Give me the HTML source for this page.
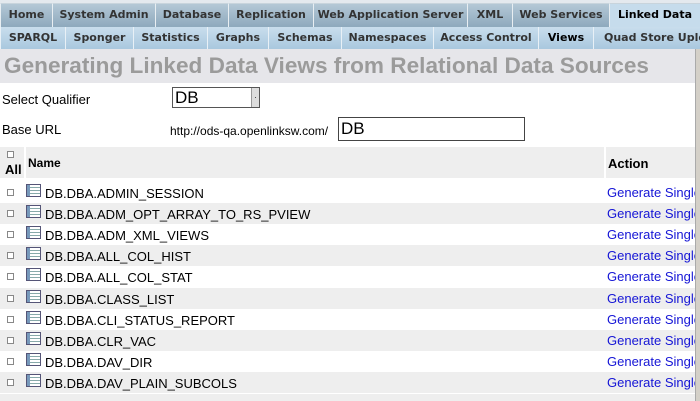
<!DOCTYPE html><html><head><style>
body{margin:0;width:700px;height:401px;overflow:hidden;background:#fff;font-family:"Liberation Sans",sans-serif;position:relative}
.a{position:absolute}
.t1{top:3px;height:24px;background:linear-gradient(#b4c8d6,#8ea9bd);border-left:1px solid #e8eef2;border-top:1px solid #c8d4dc;box-sizing:border-box;font-family:"DejaVu Sans",sans-serif;font-weight:bold;font-size:11px;color:#333;text-align:center;line-height:22px}
.t2{top:27px;height:22px;background:linear-gradient(#c9deed,#a9c8de);border-left:1px solid #e8f0f6;box-sizing:border-box;font-family:"DejaVu Sans",sans-serif;font-weight:bold;font-size:11px;color:#333;text-align:center;line-height:21px;white-space:nowrap;overflow:hidden}
.r{position:absolute;left:0;width:695px;height:21px;font-size:13px;color:#000;overflow:hidden}
.r.g{background:#eeeeee}
.cb{position:absolute;left:7px;top:7px;width:5px;height:5px;border:1px solid #888;background:#fff}
.ic{position:absolute;left:26px;top:2px;width:13px;height:11px;border:1px solid #557;background:repeating-linear-gradient(#fff 0 2px,#8aa 2px 3px);box-shadow:inset 3px 0 0 #79b}
.nm{position:absolute;left:45px;top:4px}
.ac{position:absolute;left:607px;top:3px;color:#1515d6;white-space:nowrap;font-size:13px}
</style></head><body>
<div class="a" style="left:0;top:0;width:700px;height:3px;background:#e4e9ee"></div>
<div class="a t1" style="left:0;width:52px">Home</div>
<div class="a t1" style="left:52px;width:103px">System Admin</div>
<div class="a t1" style="left:155px;width:73px">Database</div>
<div class="a t1" style="left:228px;width:85px">Replication</div>
<div class="a t1" style="left:313px;width:154px">Web Application Server</div>
<div class="a t1" style="left:467px;width:45px">XML</div>
<div class="a t1" style="left:512px;width:97px">Web Services</div>
<div class="a t1" style="left:609px;width:91px;background:#c6dcec;color:#000">Linked Data</div>
<div class="a t2" style="left:0;width:65px">SPARQL</div>
<div class="a t2" style="left:65px;width:68px">Sponger</div>
<div class="a t2" style="left:133px;width:74px">Statistics</div>
<div class="a t2" style="left:207px;width:61px">Graphs</div>
<div class="a t2" style="left:268px;width:73px">Schemas</div>
<div class="a t2" style="left:341px;width:92px">Namespaces</div>
<div class="a t2" style="left:433px;width:105px">Access Control</div>
<div class="a t2" style="left:538px;width:55px;color:#000">Views</div>
<div class="a t2" style="left:593px;width:107px;text-align:left;padding-left:10px">Quad Store Upload</div>
<div class="a" style="left:0;top:49px;width:700px;height:34px;background:#e6e6ea"></div>
<div class="a" style="left:4px;top:53px;font-size:22.6px;font-weight:bold;color:#9b9b9b;white-space:nowrap">Generating Linked Data Views from Relational Data Sources</div>
<div class="a" style="left:2px;top:92px;font-size:13px">Select Qualifier</div>
<div class="a" style="left:172px;top:87px;width:88px;height:21px;border:1px solid #555;box-sizing:border-box;background:#fff;font-size:17px;line-height:19px;padding-left:2px">DB<div class="a" style="right:0;top:0;width:7px;height:19px;background:#ddd;border-left:1px solid #999;font-size:8px;line-height:19px;text-align:center">·</div></div>
<div class="a" style="left:2px;top:122px;font-size:13px">Base URL</div>
<div class="a" style="left:170px;top:124px;font-size:12px">http://ods-qa.openlinksw.com/</div>
<div class="a" style="left:338px;top:117px;width:187px;height:24px;border:1px solid #444;box-sizing:border-box;font-size:17px;line-height:22px;padding-left:2px">DB</div>
<div class="a" style="left:0;top:147px;width:24px;height:31px;background:#eee"></div>
<div class="a" style="left:26px;top:147px;width:578px;height:31px;background:#eee"></div>
<div class="a" style="left:606px;top:147px;width:89px;height:31px;background:#eee"></div>
<div class="a" style="left:7px;top:151px;width:5px;height:5px;border:1px solid #888;background:#fff"></div>
<div class="a" style="left:5px;top:162px;font-size:13px;font-weight:bold">All</div>
<div class="a" style="left:28px;top:156px;font-size:12px;font-weight:bold">Name</div>
<div class="a" style="left:608px;top:156px;font-size:13px;font-weight:bold">Action</div>
<div class="r" style="top:182px"><div class="cb"></div><div class="ic"></div><div class="nm">DB.DBA.ADMIN_SESSION</div><div class="ac">Generate Single</div></div>
<div class="r g" style="top:203px"><div class="cb"></div><div class="ic"></div><div class="nm">DB.DBA.ADM_OPT_ARRAY_TO_RS_PVIEW</div><div class="ac">Generate Single</div></div>
<div class="r" style="top:224px"><div class="cb"></div><div class="ic"></div><div class="nm">DB.DBA.ADM_XML_VIEWS</div><div class="ac">Generate Single</div></div>
<div class="r g" style="top:245px"><div class="cb"></div><div class="ic"></div><div class="nm">DB.DBA.ALL_COL_HIST</div><div class="ac">Generate Single</div></div>
<div class="r" style="top:266px"><div class="cb"></div><div class="ic"></div><div class="nm">DB.DBA.ALL_COL_STAT</div><div class="ac">Generate Single</div></div>
<div class="r g" style="top:288px"><div class="cb"></div><div class="ic"></div><div class="nm">DB.DBA.CLASS_LIST</div><div class="ac">Generate Single</div></div>
<div class="r" style="top:309px"><div class="cb"></div><div class="ic"></div><div class="nm">DB.DBA.CLI_STATUS_REPORT</div><div class="ac">Generate Single</div></div>
<div class="r g" style="top:330px"><div class="cb"></div><div class="ic"></div><div class="nm">DB.DBA.CLR_VAC</div><div class="ac">Generate Single</div></div>
<div class="r" style="top:351px"><div class="cb"></div><div class="ic"></div><div class="nm">DB.DBA.DAV_DIR</div><div class="ac">Generate Single</div></div>
<div class="r g" style="top:372px"><div class="cb"></div><div class="ic"></div><div class="nm">DB.DBA.DAV_PLAIN_SUBCOLS</div><div class="ac">Generate Single</div></div>
<div class="a" style="left:0;top:394px;width:695px;height:7px;background:#eee"></div>
<div class="a" style="left:695px;top:49px;width:5px;height:352px;background:#d4d0c8;border-left:1px solid #aaa"></div>
</body></html>
